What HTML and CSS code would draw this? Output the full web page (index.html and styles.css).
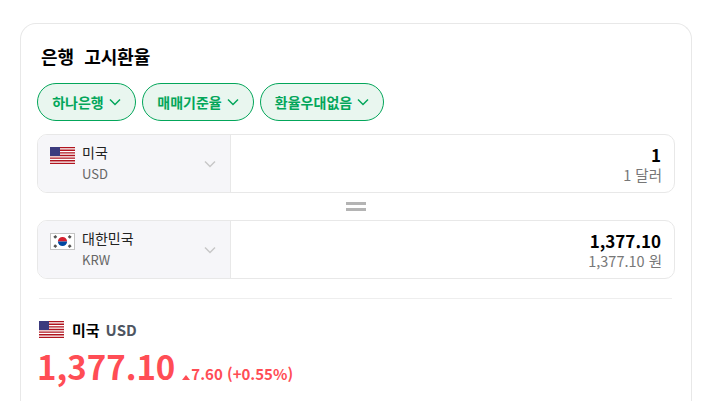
FILE: index.html
```html
<!DOCTYPE html>
<html lang="ko">
<head>
    <meta charset="UTF-8">
    <meta name="viewport" content="width=device-width, initial-scale=1.0">
    <title>은행 고시환율</title>
    <link rel="stylesheet" href="styles.css">
</head>
<body>
    <svg class="defs" width="0" height="0">
        <defs>
            <symbol id="flag-us" viewBox="0 0 25 17">
                <rect width="25" height="17" fill="#fff"/>
                <path d="M0 .65h25M0 3.27h25M0 5.88h25M0 8.5h25M0 11.12h25M0 13.73h25M0 16.35h25" stroke="#b0141f" stroke-width="1.3"/>
                <rect width="10" height="9" fill="#3c3b7e"/>
            </symbol>
            <symbol id="flag-kr" viewBox="0 0 25 17">
                <rect x=".5" y=".5" width="24" height="16" fill="#fff" stroke="#c4c4c4"/>
                <path d="M7.9 8.5a4.6 4.6 0 0 1 9.2 0z" fill="#d4202f"/>
                <path d="M7.9 8.5a4.6 4.6 0 0 0 9.2 0z" fill="#0047a0"/>
                <path d="M4.2 4.8l2.2-1.9M18.6 2.9l2.2 1.9M4.2 12.2l2.2 1.9M18.6 14.1l2.2-1.9" stroke="#555" stroke-width="2.6"/>
            </symbol>
            <symbol id="chevron" viewBox="0 0 12 8">
                <path d="M1 1.5l5 5 5-5" fill="none" stroke="currentColor" stroke-width="1.5"/>
            </symbol>
        </defs>
    </svg>

    <div class="card">
        <h2 class="title">은행 고시환율</h2>

        <div class="filters">
            <button class="pill">하나은행 <svg class="pill-arrow"><use href="#chevron"/></svg></button>
            <button class="pill">매매기준율 <svg class="pill-arrow"><use href="#chevron"/></svg></button>
            <button class="pill">환율우대없음 <svg class="pill-arrow"><use href="#chevron"/></svg></button>
        </div>

        <div class="converter">
            <div class="currency-select">
                <svg class="flag"><use href="#flag-us"/></svg>
                <div class="currency-name">
                    <div>미국</div>
                    <div class="currency-code">USD</div>
                </div>
                <svg class="select-arrow"><use href="#chevron"/></svg>
            </div>
            <div class="amount">
                <div class="amount-value">1</div>
                <div class="amount-text">1 달러</div>
            </div>
        </div>

        <div class="equals"></div>

        <div class="converter">
            <div class="currency-select">
                <svg class="flag"><use href="#flag-kr"/></svg>
                <div class="currency-name">
                    <div>대한민국</div>
                    <div class="currency-code">KRW</div>
                </div>
                <svg class="select-arrow"><use href="#chevron"/></svg>
            </div>
            <div class="amount">
                <div class="amount-value">1,377.10</div>
                <div class="amount-text">1,377.10 원</div>
            </div>
        </div>

        <div class="rate">
            <div class="rate-head">
                <svg class="flag"><use href="#flag-us"/></svg>
                <strong>미국</strong>
                <span class="rate-code">USD</span>
            </div>
            <div class="rate-line">
                <span class="rate-price">1,377.10</span>
                <span class="rate-up"></span>
                <span class="rate-change">7.60 (+0.55%)</span>
            </div>
        </div>
    </div>
</body>
</html>
```

FILE: styles.css
```css
html, body {
    height: 401px;
    overflow: hidden;
}
body {
    margin: 0;
    padding: 23px 15px 0 20px;
    background: #fff;
    color: #000;
    font-family: "Noto Sans CJK KR", "Noto Sans", sans-serif;
}
.defs {
    position: absolute;
}
.card {
    height: 377px;
    padding: 19px 16px 0 16px;
    border: 1px solid #e8e8e8;
    border-bottom: 0;
    border-radius: 16px 16px 0 0;
}
.title {
    margin: 0 0 14px 4px;
    font-size: 18px;
    line-height: 26px;
    font-weight: 700;
    word-spacing: 5px;
}
.filters {
    display: flex;
    gap: 6px;
    margin-bottom: 13px;
}
.pill {
    display: flex;
    align-items: center;
    justify-content: center;
    gap: 5px;
    height: 38px;
    padding: 0;
    border: 1px solid #03a65a;
    border-radius: 19px;
    background: #e9f6ef;
    color: #03a65a;
    font-family: inherit;
    font-size: 14px;
    font-weight: 700;
}
.pill:nth-child(1) { width: 99px; }
.pill:nth-child(2) { width: 112px; }
.pill:nth-child(3) { width: 124px; }
.pill-arrow {
    width: 12px;
    height: 8px;
}
.converter {
    display: flex;
    height: 59px;
    box-sizing: border-box;
    border: 1px solid #e8e8e8;
    border-radius: 10px;
    overflow: hidden;
}
.currency-select {
    display: flex;
    align-items: flex-start;
    width: 193px;
    padding: 12px 0 0 12px;
    box-sizing: border-box;
    border-right: 1px solid #e8e8e8;
    background: #f6f6f9;
    font-size: 14px;
    line-height: 19px;
}
.flag {
    width: 25px;
    height: 17px;
    flex: none;
}
.currency-name {
    margin: -4px 0 0 7px;
    flex: 1;
    color: #222;
}
.currency-code {
    margin-top: 2px;
    font-size: 13px;
    color: #666;
}
.select-arrow {
    width: 12px;
    height: 8px;
    margin: 13px 14px 0 0;
    color: #c8c8c8;
}
.amount {
    flex: 1;
    padding: 9px 13px 0 0;
    text-align: right;
}
.amount-value {
    font-size: 17px;
    line-height: 21px;
    font-weight: 700;
}
.amount-text {
    margin-right: -1px;
    font-size: 14.5px;
    line-height: 20px;
    color: #777;
}
.equals {
    width: 20px;
    height: 3px;
    margin: 9px auto;
    border-top: 3px solid #b4b4b4;
    border-bottom: 3px solid #b4b4b4;
}
.rate {
    margin: 19px 3px 0 2px;
    padding-top: 22px;
    border-top: 1px solid #eee;
}
.rate-head {
    display: flex;
    align-items: center;
    height: 17px;
    font-size: 15px;
}
.rate-head strong {
    margin-left: 8px;
}
.rate-code {
    margin-left: 6px;
    font-size: 15px;
    font-weight: 700;
    color: #4e5561;
}
.rate-line {
    display: flex;
    align-items: baseline;
    margin-top: 6px;
    color: #ff4d55;
    font-weight: 700;
}
.rate-price {
    font-size: 33px;
    line-height: 44px;
    margin-left: -2px;
}
.rate-up {
    width: 0;
    height: 0;
    margin: 0 1px 0 7px;
    border-left: 4px solid transparent;
    border-right: 4px solid transparent;
    border-bottom: 5px solid #ff4d55;
}
.rate-change {
    font-size: 15px;
}
```
